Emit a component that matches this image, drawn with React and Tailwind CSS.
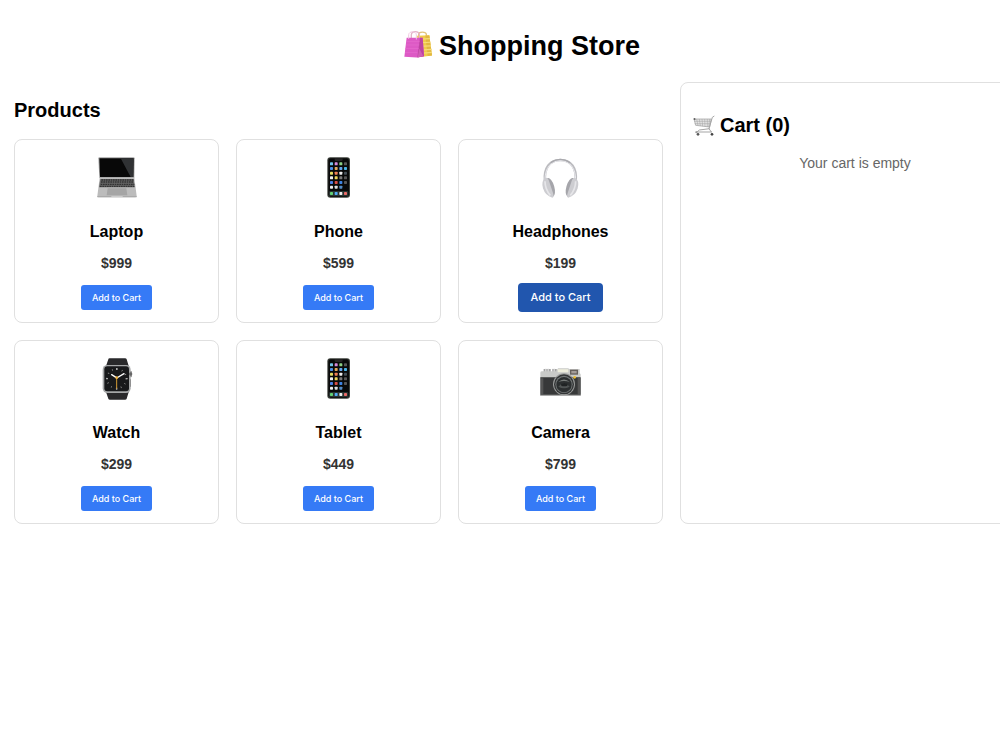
import React, { useState } from "react";

const BagsIcon = () => (
  <svg viewBox="0 0 84 96" className="h-8 w-7" aria-hidden="true">
    <g transform="translate(0 -2) scale(1 .9)">
      <path d="M44 26V17c0-10 22-10 23 0v9" fill="none" stroke="#e3c47c" strokeWidth="4" />
      <path d="M39 21l37-1 8 67-33 5z" fill="#f0cb4b" />
      <path d="M64 21l12-1 8 67-13 2z" fill="#e2b840" />
      <path d="M41 33l37-2M42 45l37-2M44 57l37-2M46 69l37-2M48 80l36-3" stroke="#f6dc79" strokeWidth="4" />
      <path d="M22 32V18c1-14 23-14 24 0v14" fill="none" stroke="#e3b4c8" strokeWidth="4" />
      <path d="M8 28h48l4 62-22 4L1 91z" fill="#dd5ac5" />
      <path d="M48 28h8l4 62-20 4z" fill="#bd43a2" />
      <path d="M46 64l12 26-17 4z" fill="#d05fb6" />
      <path d="M14 32V18c1-13 22-13 23 0v16" fill="none" stroke="#efc5df" strokeWidth="3" />
      <path d="M7 40h40M6 52h40M4 64h40M3 77h37" stroke="#e56dcf" strokeWidth="2" />
    </g>
  </svg>
);

const CartIcon = () => (
  <svg viewBox="0 0 66 72" className="h-6 w-[22px]" fill="none" aria-hidden="true">
    <path d="M3 18h52l-5 24-42-5z" fill="#e4e4e4" stroke="#999" strokeWidth="2" />
    <path d="M11 18l4 20M19 18l3 21M27 18l2 22M35 18l1 23M43 18v24M50 18l-3 24M4 25h50M5 32h47" stroke="#a0a0a0" strokeWidth="1.5" />
    <path d="M64 9l-6 4-10 34 7 10M8 57h49M12 57l7-6 31-4" stroke="#a5a5a5" strokeWidth="3" />
    <path d="M2 17l5 2" stroke="#444" strokeWidth="4" />
    <circle cx="15" cy="64" r="4" fill="#555" />
    <circle cx="57" cy="64" r="4" fill="#444" />
    <circle cx="10" cy="58" r="3" fill="#999" />
  </svg>
);

const LaptopIcon = () => (
  <svg viewBox="0 0 162 162" className="size-[54px]" aria-hidden="true">
    <path d="M25 25q0-3 3-3h102q4 0 4 3l-1 59H28z" fill="#a5a5a5" />
    <path d="M28 25h103l-1 56H30z" fill="#080808" />
    <path d="M92 25h39l-1 56h-8z" fill="#303234" />
    <path d="M29 83h104l7 55q0 4-5 4H26q-5 0-4-4z" fill="#bcbcbc" />
    <path d="M31 87h100l3 25H27z" fill="#666" />
    <path d="M34 90h96M33 96h98M32 103h101M30 109h104" stroke="#333" strokeWidth="4" strokeDasharray="5 2" />
    <path d="M53 115h56l3 21H50z" fill="#a5a5a5" />
    <path d="M22 138h118v4H22z" fill="#aaa" />
    <path d="M64 139h34v3H64z" fill="#ddd" />
  </svg>
);

const apps = [
  ["#6fc4e9", "#d58adb", "#8bcf83", "#555"],
  ["#4b8de8", "#e0a95e", "#65a6ec", "#4ab5e6"],
  ["#e6dc60", "#ef8055", "#eee", "#424d55"],
  ["#eee", "#eed65b", "#777", "#555"],
  ["#4b80e5", "#d84d45", "#3d83e3", "#555"],
];

const PhoneIcon = () => (
  <svg viewBox="0 0 162 162" className="size-[54px]" aria-hidden="true">
    <rect x="46" y="22" width="68" height="121" rx="9" fill="#3c403b" />
    <rect x="49" y="25" width="62" height="115" rx="7" fill="#080909" />
    <path d="M68 25h24v4q0 4-4 4H72q-4 0-4-4z" fill="#252525" />
    {apps.map((row, y) =>
      row.map((color, x) => (
        <rect key={`${x}-${y}`} x={54 + x * 14} y={37 + y * 14} width="9" height="9" rx="2" fill={color} />
      ))
    )}
    <rect x="54" y="107" width="9" height="9" rx="2" fill="#eee" />
    <rect x="68" y="107" width="9" height="9" rx="2" fill="#ddd" />
    <rect x="82" y="107" width="9" height="9" rx="2" fill="#548cc5" />
    <rect x="51" y="123" width="58" height="15" rx="4" fill="#293431" />
    <rect x="54" y="126" width="9" height="9" rx="2" fill="#62d477" />
    <rect x="68" y="126" width="9" height="9" rx="2" fill="#50aaf2" />
    <rect x="82" y="126" width="9" height="9" rx="2" fill="#eee" />
    <rect x="96" y="126" width="9" height="9" rx="2" fill="#ec6b68" />
  </svg>
);

const HeadphonesIcon = () => (
  <svg viewBox="0 0 162 162" className="size-[54px]" fill="none" aria-hidden="true">
    <path d="M33 94C29 53 48 30 79 30s50 23 46 64" stroke="#bcbcc0" strokeWidth="8" />
    <path d="M33 91C33 54 50 32 79 32s46 22 46 59" stroke="#e9e9ed" strokeWidth="3" />
    <path d="M50 38q29-20 58 0" stroke="#a9a9ad" strokeWidth="4" />
    <ellipse cx="49" cy="112" rx="12" ry="29" transform="rotate(-16 49 112)" fill="#a5a5aa" />
    <ellipse cx="109" cy="112" rx="12" ry="29" transform="rotate(16 109 112)" fill="#a5a5aa" />
    <path d="M34 84q-13 8-7 31 7 23 28 28 6-1 2-14l-13-39q-4-8-10-6z" fill="#cdcdd1" />
    <path d="M124 84q13 8 7 31-7 23-28 28-6-1-2-14l13-39q4-8 10-6z" fill="#cdcdd1" />
    <path d="M33 94q0 24 16 42M125 94q0 24-16 42" stroke="#e6e6e9" strokeWidth="5" />
  </svg>
);

const WatchIcon = () => (
  <svg viewBox="0 -3 162 162" className="size-[54px]" aria-hidden="true">
    <path d="M55 22q0-3 4-3h46q4 0 5 3l7 23H47zM47 117h70l-7 23q-1 3-5 3H60q-4 0-5-3z" fill="#29292b" />
    <rect x="38" y="39" width="84" height="84" rx="14" fill="#a5a7a8" />
    <rect x="43" y="43" width="74" height="75" rx="9" fill="#18191b" />
    <rect x="120" y="57" width="6" height="19" rx="3" fill="#999" />
    <circle cx="122" cy="66" r="5" fill="#666" />
    <path d="M121 82h2v22h-2z" fill="#777" />
    <circle cx="80" cy="80" r="29" fill="none" stroke="#999" strokeWidth="5" strokeDasharray="2 13.2" />
    <path d="M80 48v6M80 107v6M48 80h6M107 80h6" stroke="#aaa" strokeWidth="4" />
    <path d="M79 77L65 68M80 78l22-13" stroke="#fff" strokeWidth="4" strokeLinecap="round" />
    <path d="M80 76v34" stroke="#d49a32" strokeWidth="3" />
    <circle cx="80" cy="77" r="4" fill="#edb23f" />
  </svg>
);

const CameraIcon = () => (
  <svg viewBox="0 -3 162 162" className="size-[54px]" aria-hidden="true">
    <path d="M29 51h21v11H29zM54 51h14v10H54z" fill="#999" />
    <path d="M34 50v10M39 50v10M44 50v10M57 50v10M62 50v10" stroke="#ddd" strokeWidth="3" />
    <path d="M67 58l5-9h30l5 2h30v12l3 4v12H19V62q0-4 5-4z" fill="#c9cac8" />
    <rect x="71" y="52" width="32" height="9" rx="1" fill="#eeeedc" />
    <rect x="108" y="53" width="24" height="15" fill="#66605d" />
    <path d="M112 57h16v7h-16z" fill="#a39c99" />
    <path d="M19 76h121v51q0 5-5 5H24q-5 0-5-5z" fill="#373839" />
    <path d="M21 79h7v48h-7zM131 78h8v49h-8z" fill="#555" />
    <circle cx="90" cy="97" r="33" fill="#999b9a" />
    <circle cx="90" cy="97" r="30" fill="#333536" />
    <circle cx="90" cy="97" r="26" fill="#737777" />
    <circle cx="90" cy="98" r="23" fill="#2c2f30" />
    <path d="M72 91q18-17 36 0-18-8-36 0z" fill="#777b79" />
    <path d="M73 104q17-20 34 0-17 10-34 0z" fill="#505454" />
    <ellipse cx="91" cy="98" rx="10" ry="5" fill="#202324" />
    <circle cx="122" cy="76" r="4" fill="#edbd32" />
    <path d="M19 128h121v4H19z" fill="#aaa" />
  </svg>
);

const products = [
  { id: 1, name: "Laptop", price: 999, icon: LaptopIcon },
  { id: 2, name: "Phone", price: 599, icon: PhoneIcon },
  { id: 3, name: "Headphones", price: 199, icon: HeadphonesIcon, active: true },
  { id: 4, name: "Watch", price: 299, icon: WatchIcon },
  { id: 5, name: "Tablet", price: 449, icon: PhoneIcon },
  { id: 6, name: "Camera", price: 799, icon: CameraIcon },
];

const ProductCard = ({ product, onAdd }) => {
  const Icon = product.icon;
  return (
    <article className="flex flex-col items-center rounded-lg border border-[#e0e0e0] pt-[10px] pb-3">
      <Icon />
      <h3 className="mt-4 text-base leading-6 font-bold">{product.name}</h3>
      <p className="mt-[9px] text-sm leading-5 font-bold text-[#333333]">${product.price}</p>
      <div className="mt-3 flex h-[25px] items-center">
        <button
          onClick={onAdd}
          className={`shrink-0 font-['Inter',sans-serif] font-medium text-white ${
            product.active
              ? "h-[29px] w-[85px] rounded bg-[#2156ae] text-[11px]"
              : "h-[25px] w-[71px] rounded-[3px] bg-[#357af6] text-[9px]"
          }`}
        >
          Add to Cart
        </button>
      </div>
    </article>
  );
};

const App = () => {
  const [cart, setCart] = useState([]);

  return (
    <div className="min-h-screen overflow-hidden bg-white font-['Liberation_Sans',Arial,sans-serif] text-black">
      {/* the store is a little wider than the window, the cart runs off the right edge */}
      <div className="w-[calc(100%+44px)] px-[14px] pt-[30px]">
        <h1 className="flex items-center justify-center gap-[7px] text-[27px] leading-8 font-bold">
          <BagsIcon />
          Shopping Store
        </h1>
        <main className="mt-5 grid grid-cols-[1fr_350px] gap-[17px]">
          <section className="pt-4">
            <h2 className="text-[20px] leading-6 font-bold">Products</h2>
            <div className="mt-[17px] grid grid-cols-3 gap-[17px]">
              {products.map((product) => (
                <ProductCard
                  key={product.id}
                  product={product}
                  onAdd={() => setCart([...cart, product])}
                />
              ))}
            </div>
          </section>
          <aside className="rounded-lg border border-[#e0e0e0] px-3 pt-[30px]">
            <h2 className="flex items-center gap-[5px] text-[20px] leading-6 font-bold">
              <CartIcon />
              Cart ({cart.length})
            </h2>
            {cart.length === 0 ? (
              <p className="mt-4 text-center text-sm leading-5 text-[#666666]">Your cart is empty</p>
            ) : (
              <ul className="mt-4 text-sm leading-5">
                {cart.map((item, idx) => (
                  <li key={idx} className="flex justify-between">
                    <span>{item.name}</span>
                    <span>${item.price}</span>
                  </li>
                ))}
              </ul>
            )}
          </aside>
        </main>
      </div>
    </div>
  );
};

export default App;
